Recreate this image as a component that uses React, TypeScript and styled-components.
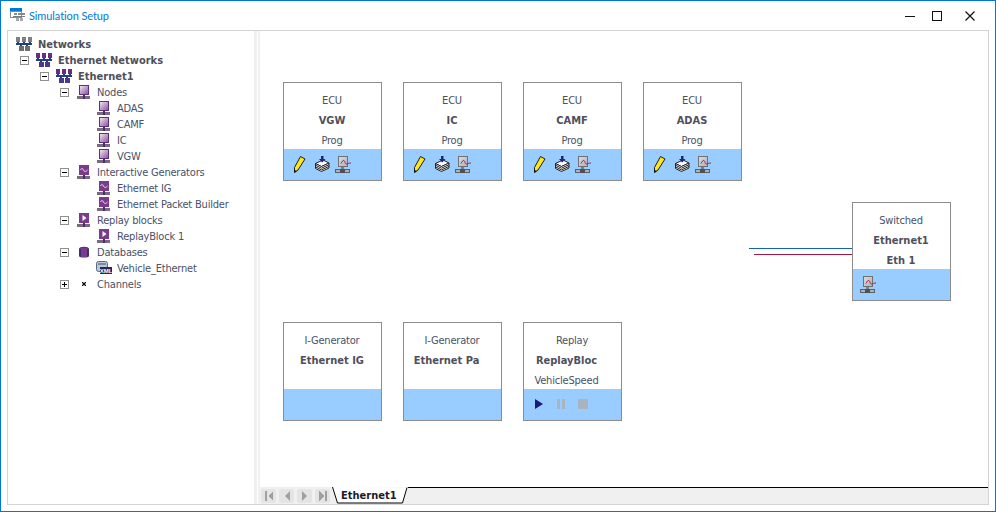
import styled, { createGlobalStyle } from "styled-components";

const FONT = `"DejaVu Sans Condensed", "Liberation Sans", sans-serif`;

const GlobalStyle = createGlobalStyle`
    html, body {
        margin: 0;
        padding: 0;
        background: #ffffff;
    }
`;

/* ---- tree icons ---- */

const NetworkIcon = ({ tone }: { tone: "gray" | "purple" }) => {
    const top = tone === "gray" ? "#7f7f7f" : "#6c2a86";
    const bottom = tone === "gray" ? "#6f6f6f" : "#4d3690";
    return (
        <svg width="16" height="16" viewBox="0 0 16 16" shapeRendering="crispEdges">
            <rect x="0" y="1" width="4" height="5" fill={top} />
            <rect x="6" y="1" width="4" height="5" fill={top} />
            <rect x="12" y="1" width="4" height="5" fill={top} />
            <rect x="1" y="6" width="2" height="2" fill="#1f3f80" />
            <rect x="7" y="6" width="2" height="2" fill="#1f3f80" />
            <rect x="13" y="6" width="2" height="2" fill="#1f3f80" />
            <rect x="0" y="7" width="16" height="2" fill="#1f3f80" />
            <rect x="4" y="9" width="2" height="2" fill="#1f3f80" />
            <rect x="10" y="9" width="2" height="2" fill="#1f3f80" />
            <rect x="3" y="10" width="5" height="5" fill={bottom} />
            <rect x="9" y="10" width="5" height="5" fill={bottom} />
        </svg>
    );
};

const NodeBase = () => (
    <>
        <rect x="1" y="12" width="13" height="3" fill="#7a6a80" />
        <rect x="7" y="11" width="2" height="4" fill="#4a2a70" />
    </>
);

const NodeIcon = () => (
    <svg width="16" height="16" viewBox="0 0 16 16" shapeRendering="crispEdges">
        <defs>
            <linearGradient id="nodeFill" x1="0" y1="0" x2="1" y2="1">
                <stop offset="0" stopColor="#f6eef8" />
                <stop offset="1" stopColor="#8a4a9c" />
            </linearGradient>
        </defs>
        <rect x="3.500" y="1.500" width="9" height="9" fill="url(#nodeFill)" stroke="#5a3080" />
        <NodeBase />
    </svg>
);

const GeneratorIcon = () => (
    <svg width="16" height="16" viewBox="0 0 16 16">
        <rect x="3" y="1" width="10" height="10" fill="#7b3a8e" shapeRendering="crispEdges" />
        <path d="M4.500 6c1-2 2-2 3 0s2 2 4 0" fill="none" stroke="#f4e8f8" strokeWidth="1" />
        <g shapeRendering="crispEdges">
            <NodeBase />
        </g>
    </svg>
);

const ReplayIcon = () => (
    <svg width="16" height="16" viewBox="0 0 16 16">
        <rect x="3" y="1" width="10" height="10" fill="#7b3a8e" shapeRendering="crispEdges" />
        <path d="M6.500 3L10.500 6L6.500 9Z" fill="#ffffff" />
        <g shapeRendering="crispEdges">
            <NodeBase />
        </g>
    </svg>
);

const DatabaseIcon = () => (
    <svg width="16" height="16" viewBox="0 0 16 16">
        <path d="M3 5c0-3 10-3 10 0v7c0 2-10 2-10 0Z" fill="#3c3070" />
        <rect x="5" y="5" width="6" height="8" fill="#7b3a8e" />
        <ellipse cx="8" cy="4.500" rx="4" ry="1" fill="#7b3a8e" />
    </svg>
);

const XmlIcon = () => (
    <svg width="16" height="16" viewBox="0 0 16 16">
        <rect x="0.500" y="1.500" width="11" height="10" rx="2" fill="#b9c8d8" stroke="#5a6a80" />
        <rect x="2" y="3" width="8" height="2" fill="#7b8ca0" />
        <rect x="4" y="7" width="12" height="7" fill="#26265c" />
        <text x="10" y="13" fontSize="6" fontWeight="700" textAnchor="middle" fill="#ffffff" fontFamily="Liberation Sans, sans-serif">
            XML
        </text>
    </svg>
);

const ChannelIcon = () => (
    <svg width="16" height="16" viewBox="0 0 16 16" shapeRendering="crispEdges">
        <rect x="6" y="6" width="1" height="1" fill="#111" />
        <rect x="9" y="6" width="1" height="1" fill="#111" />
        <rect x="6" y="9" width="1" height="1" fill="#111" />
        <rect x="9" y="9" width="1" height="1" fill="#111" />
        <rect x="7" y="7" width="2" height="2" fill="#111" />
        <rect x="7" y="6" width="2" height="1" fill="#999" />
        <rect x="7" y="9" width="2" height="1" fill="#999" />
        <rect x="6" y="7" width="1" height="2" fill="#999" />
        <rect x="9" y="7" width="1" height="2" fill="#999" />
    </svg>
);

/* ---- card icons, all on a 20x20 tool slot ---- */

const PencilIcon = () => (
    <svg width="20" height="20" viewBox="0 0 20 20">
        <path d="M8.500 1.500L13 4L6 15L2.500 17.500L2.500 12.500Z" fill="#ffe61a" stroke="#1a1a1a" strokeWidth="1" />
        <path d="M2 18L2.500 15L5 16Z" fill="#111" />
    </svg>
);

const StackIcon = () => (
    <svg width="20" height="20" viewBox="0 0 20 20">
        <path d="M3.500 8.500L11 5L17 8L9.500 11.500Z" fill="#fff" stroke="#222" strokeWidth="1" />
        <path d="M3.500 8.500v5l6 3l7.500-3.500v-5l-7.500 3.500Z" fill="#fff" stroke="#222" strokeWidth="1" />
        <path d="M3.500 10.200l6 3l7.500-3.500M3.500 11.900l6 3l7.500-3.500" fill="none" stroke="#222" strokeWidth="1" />
        <path d="M9 1h2.500v3h2L10.200 7.500L7 4h2Z" fill="#23237a" />
    </svg>
);

const MonitorIcon = () => (
    <svg width="20" height="20" viewBox="0 0 20 20">
        <defs>
            <linearGradient id="screenFill" x1="0" y1="0" x2="1" y2="1">
                <stop offset="0" stopColor="#d8dde2" />
                <stop offset="1" stopColor="#a8b4c0" />
            </linearGradient>
        </defs>
        <g shapeRendering="crispEdges">
            <rect x="6.500" y="1.500" width="9" height="10" fill="url(#screenFill)" stroke="#707070" />
            <rect x="9" y="12" width="3" height="3" fill="#808080" />
            <rect x="3.500" y="14.500" width="14" height="3" fill="#a8b4c0" stroke="#606060" />
            <rect x="8" y="14" width="5" height="4" fill="#505050" />
        </g>
        <path d="M9 8.500c1-2 2-3.500 3-3s1 3.500 2.500 3.500s1.500-1 4.500-1" fill="none" stroke="#c01830" strokeWidth="1" />
    </svg>
);

const PlayIcon = () => (
    <svg width="20" height="20" viewBox="0 0 20 20">
        <path d="M3 4L11 9L3 14Z" fill="#1a1a78" />
    </svg>
);

const PauseIcon = () => (
    <svg width="20" height="20" viewBox="0 0 20 20" shapeRendering="crispEdges">
        <rect x="5" y="4" width="3" height="10" fill="#a8b4c0" />
        <rect x="10" y="4" width="3" height="10" fill="#a8b4c0" />
    </svg>
);

const StopIcon = () => (
    <svg width="20" height="20" viewBox="0 0 20 20" shapeRendering="crispEdges">
        <rect x="6" y="4" width="10" height="10" fill="#a8b4c0" />
    </svg>
);

/* ---- data ---- */

type TreeItem = {
    label: string;
    depth: number;
    expander?: "minus" | "plus";
    bold?: boolean;
    icon: React.ReactNode;
};

const treeItems: TreeItem[] = [
    { label: "Networks", depth: 0, bold: true, icon: <NetworkIcon tone="gray" /> },
    { label: "Ethernet Networks", depth: 1, bold: true, expander: "minus", icon: <NetworkIcon tone="purple" /> },
    { label: "Ethernet1", depth: 2, bold: true, expander: "minus", icon: <NetworkIcon tone="purple" /> },
    { label: "Nodes", depth: 3, expander: "minus", icon: <NodeIcon /> },
    { label: "ADAS", depth: 4, icon: <NodeIcon /> },
    { label: "CAMF", depth: 4, icon: <NodeIcon /> },
    { label: "IC", depth: 4, icon: <NodeIcon /> },
    { label: "VGW", depth: 4, icon: <NodeIcon /> },
    { label: "Interactive Generators", depth: 3, expander: "minus", icon: <GeneratorIcon /> },
    { label: "Ethernet IG", depth: 4, icon: <GeneratorIcon /> },
    { label: "Ethernet Packet Builder", depth: 4, icon: <GeneratorIcon /> },
    { label: "Replay blocks", depth: 3, expander: "minus", icon: <ReplayIcon /> },
    { label: "ReplayBlock 1", depth: 4, icon: <ReplayIcon /> },
    { label: "Databases", depth: 3, expander: "minus", icon: <DatabaseIcon /> },
    { label: "Vehicle_Ethernet", depth: 4, icon: <XmlIcon /> },
    { label: "Channels", depth: 3, expander: "plus", icon: <ChannelIcon /> },
];

type CardData = {
    x: number;
    y: number;
    kind: string;
    name: string;
    sub?: string;
    subBold?: boolean;
    clipped?: boolean; // long names sit left of the centre
    tools: "ecu" | "switch" | "none" | "replay";
};

const cards: CardData[] = [
    { x: 23, y: 51, kind: "ECU", name: "VGW", sub: "Prog", tools: "ecu" },
    { x: 143, y: 51, kind: "ECU", name: "IC", sub: "Prog", tools: "ecu" },
    { x: 263, y: 51, kind: "ECU", name: "CAMF", sub: "Prog", tools: "ecu" },
    { x: 383, y: 51, kind: "ECU", name: "ADAS", sub: "Prog", tools: "ecu" },
    { x: 592, y: 171, kind: "Switched", name: "Ethernet1", sub: "Eth 1", subBold: true, tools: "switch" },
    { x: 23, y: 291, kind: "I-Generator", name: "Ethernet IG", tools: "none" },
    { x: 143, y: 291, kind: "I-Generator", name: "Ethernet Pa", clipped: true, tools: "none" },
    { x: 263, y: 291, kind: "Replay", name: "ReplayBloc", sub: "VehicleSpeed", clipped: true, tools: "replay" },
];

const App = () => {
    return (
        <>
            <GlobalStyle />
            <Window>
                <TitleBar>
                    <TitleIcon>
                        <svg width="16" height="16" viewBox="0 0 16 16" shapeRendering="crispEdges">
                            <rect x="0" y="0" width="12" height="3" fill="#0078d7" />
                            <rect x="0.500" y="3.500" width="11" height="6" fill="#fff" stroke="#8a8a8a" />
                            <rect x="4" y="5" width="3" height="2" fill="#8a8a8a" />
                            <rect x="8" y="5" width="3" height="2" fill="#8a8a8a" />
                            <rect x="12" y="5" width="3" height="2" fill="#8a8a8a" />
                            <rect x="3" y="8" width="12" height="1" fill="#6f7f90" />
                            <rect x="6" y="10" width="3" height="3" fill="#a8a8a8" />
                            <rect x="10" y="10" width="3" height="3" fill="#a8a8a8" />
                        </svg>
                    </TitleIcon>
                    <TitleText>Simulation Setup</TitleText>
                    <Controls>
                        <ControlButton $width={16}>
                            <svg width="10" height="10" viewBox="0 0 10 10" shapeRendering="crispEdges">
                                <rect x="0" y="5" width="10" height="1" fill="#111" />
                            </svg>
                        </ControlButton>
                        <ControlButton $width={27}>
                            <svg width="10" height="10" viewBox="0 0 10 10" shapeRendering="crispEdges">
                                <rect x="0.500" y="0.500" width="9" height="9" fill="none" stroke="#111" />
                            </svg>
                        </ControlButton>
                        <ControlButton $width={33}>
                            <svg width="10" height="10" viewBox="0 0 10 10">
                                <path d="M0.500 0.500L9.500 9.500M9.500 0.500L0.500 9.500" stroke="#111" strokeWidth="1.200" />
                            </svg>
                        </ControlButton>
                    </Controls>
                </TitleBar>
                <Body>
                    <Frame>
                        <TreePanel>
                            {treeItems.map((item) => (
                                <TreeRow key={item.label} $depth={item.depth}>
                                    {item.depth > 0 && (
                                        <ExpanderSlot>
                                            {item.expander && (
                                                <Expander $plus={item.expander === "plus"} />
                                            )}
                                        </ExpanderSlot>
                                    )}
                                    <TreeIcon>{item.icon}</TreeIcon>
                                    <TreeLabel $bold={item.bold}>{item.label}</TreeLabel>
                                </TreeRow>
                            ))}
                        </TreePanel>
                        <Splitter />
                        <DiagramPanel>
                            <Canvas>
                                <Wire $y={217} $left={489} $color="#1464b4" />
                                <Wire $y={223} $left={494} $color="#a01840" />
                                {cards.map((card) => (
                                    <Card key={card.name} $x={card.x} $y={card.y}>
                                        <CardText>
                                            <CardLine>{card.kind}</CardLine>
                                            <CardLine $bold $clipped={card.clipped}>{card.name}</CardLine>
                                            {card.sub && (
                                                <CardLine $bold={card.subBold} $clipped={card.clipped}>
                                                    {card.sub}
                                                </CardLine>
                                            )}
                                        </CardText>
                                        <CardFooter $inset={card.tools === "switch" ? 4 : 8}>
                                            {card.tools === "ecu" && (
                                                <>
                                                    <PencilIcon />
                                                    <StackIcon />
                                                    <MonitorIcon />
                                                </>
                                            )}
                                            {card.tools === "switch" && <MonitorIcon />}
                                            {card.tools === "replay" && (
                                                <>
                                                    <PlayIcon />
                                                    <PauseIcon />
                                                    <StopIcon />
                                                </>
                                            )}
                                        </CardFooter>
                                    </Card>
                                ))}
                            </Canvas>
                            <TabBar>
                                <NavGroup>
                                    <NavButton>
                                        <svg width="10" height="12" viewBox="0 0 10 12" shapeRendering="crispEdges">
                                            <rect x="1" y="1" width="2" height="10" fill="#a0a0a0" />
                                            <path d="M9 1L4 6L9 11Z" fill="#a0a0a0" />
                                        </svg>
                                    </NavButton>
                                    <NavButton>
                                        <svg width="10" height="12" viewBox="0 0 10 12">
                                            <path d="M8 1L3 6L8 11Z" fill="#a0a0a0" />
                                        </svg>
                                    </NavButton>
                                    <NavButton>
                                        <svg width="10" height="12" viewBox="0 0 10 12">
                                            <path d="M2 1L7 6L2 11Z" fill="#a0a0a0" />
                                        </svg>
                                    </NavButton>
                                    <NavButton>
                                        <svg width="10" height="12" viewBox="0 0 10 12" shapeRendering="crispEdges">
                                            <path d="M1 1L6 6L1 11Z" fill="#a0a0a0" />
                                            <rect x="7" y="1" width="2" height="10" fill="#a0a0a0" />
                                        </svg>
                                    </NavButton>
                                </NavGroup>
                                <TabShape>
                                    <svg width="76" height="17" viewBox="0 0 76 17">
                                        <path d="M0.500 0L5.500 16H70.500L75 0.500" fill="#ffffff" stroke="#000000" strokeWidth="1" />
                                    </svg>
                                    <TabLabel>Ethernet1</TabLabel>
                                </TabShape>
                                <TabRest />
                            </TabBar>
                        </DiagramPanel>
                    </Frame>
                </Body>
            </Window>
        </>
    );
};

export default App;

const Window = styled.div`
    box-sizing: border-box;
    width: 996px;
    height: 512px;
    display: flex;
    flex-direction: column;
    border: 1px solid #0078d7;
    background: #ffffff;
    overflow: hidden;
    font-family: ${FONT};
`;

const TitleBar = styled.div`
    display: flex;
    align-items: center;
    height: 29px;
    flex-shrink: 0;
    padding-left: 9px;
`;

const TitleIcon = styled.div`
    display: flex;
    width: 19px;
    height: 16px;
`;

const TitleText = styled.span`
    color: #0078d7;
    font-family: Lato, "Liberation Sans", sans-serif;
    font-size: 11px;
    letter-spacing: -0.1px;
`;

const Controls = styled.div`
    display: flex;
    margin-left: auto;
    padding-right: 20px;
`;

const ControlButton = styled.div<{ $width: number }>`
    display: flex;
    justify-content: flex-end;
    align-items: center;
    width: ${({ $width }) => $width}px;
    height: 29px;
`;

const Body = styled.div`
    display: flex;
    flex: 1;
    min-height: 0;
    padding: 0 6px 6px 6px;
`;

const Frame = styled.div`
    display: flex;
    flex: 1;
    min-width: 0;
    border: 1px solid #d4d4d4;
`;

const TreePanel = styled.div`
    box-sizing: border-box;
    width: 246px;
    flex-shrink: 0;
    padding: 5px 0 0 8px;
    background: #ffffff;
`;

const Splitter = styled.div`
    box-sizing: border-box;
    width: 6px;
    flex-shrink: 0;
    background: #f0f0f0;
    border-left: 3px solid #f0f0f0;
    background-clip: content-box;
    padding-left: 1px;
`;

const TreeRow = styled.div<{ $depth: number }>`
    display: flex;
    align-items: center;
    height: 16px;
    padding-left: ${({ $depth }) => Math.max(0, $depth - 1) * 20}px;
`;

const ExpanderSlot = styled.div`
    display: flex;
    align-items: center;
    width: 20px;
    height: 16px;
    padding-left: 4px;
    box-sizing: border-box;
`;

const Expander = styled.div<{ $plus?: boolean }>`
    position: relative;
    box-sizing: border-box;
    width: 9px;
    height: 9px;
    border: 1px solid #8f8f8f;
    background: #ffffff;

    &::before {
        content: "";
        position: absolute;
        left: 1px;
        top: 3px;
        width: 5px;
        height: 1px;
        background: #000000;
    }

    &::after {
        content: "";
        display: ${({ $plus }) => ($plus ? "block" : "none")};
        position: absolute;
        left: 3px;
        top: 1px;
        width: 1px;
        height: 5px;
        background: #000000;
    }
`;

const TreeIcon = styled.div`
    display: flex;
    width: 16px;
    height: 16px;
    margin-right: 5px;
    flex-shrink: 0;
`;

const TreeLabel = styled.span<{ $bold?: boolean }>`
    color: ${({ $bold }) => ($bold ? "#4f4f5c" : "#4a5068")};
    font-size: 11px;
    line-height: 16px;
    padding-top: 2px;
    font-weight: ${({ $bold }) => ($bold ? 700 : 400)};
    letter-spacing: ${({ $bold }) => ($bold ? 0 : -0.2)}px;
    margin-left: ${({ $bold }) => ($bold ? 1 : 0)}px;
    white-space: nowrap;
`;

const DiagramPanel = styled.div`
    flex: 1;
    display: flex;
    flex-direction: column;
    min-width: 0;
    background: #ffffff;
`;

const Canvas = styled.div`
    position: relative;
    flex: 1;
    min-height: 0;
`;

const Wire = styled.div<{ $y: number; $left: number; $color: string }>`
    position: absolute;
    left: ${({ $left }) => $left}px;
    top: ${({ $y }) => $y}px;
    width: ${({ $left }) => 593 - $left}px;
    height: 1px;
    background: ${({ $color }) => $color};
`;

const Card = styled.div<{ $x: number; $y: number }>`
    position: absolute;
    left: ${({ $x }) => $x}px;
    top: ${({ $y }) => $y}px;
    box-sizing: border-box;
    width: 99px;
    height: 99px;
    display: flex;
    flex-direction: column;
    border: 1px solid #8c8c8c;
    background: #ffffff;
`;

const CardText = styled.div`
    box-sizing: border-box;
    height: 66px;
    padding: 8px 1px 0 0;
    display: flex;
    flex-direction: column;
    align-items: center;
    overflow: hidden;
`;

const CardLine = styled.div<{ $bold?: boolean; $clipped?: boolean }>`
    color: ${({ $bold }) => ($bold ? "#4f4f5c" : "#4a5068")};
    font-size: 11px;
    line-height: 20px;
    font-weight: ${({ $bold }) => ($bold ? 700 : 400)};
    letter-spacing: ${({ $bold }) => ($bold ? 0 : -0.2)}px;
    margin-right: ${({ $clipped }) => ($clipped ? 11 : 0)}px;
    white-space: nowrap;
`;

const CardFooter = styled.div<{ $inset: number }>`
    flex: 1;
    display: flex;
    align-items: flex-start;
    padding: 6px 0 0 ${({ $inset }) => $inset}px;
    background: #99ccff;
`;

const TabBar = styled.div`
    display: flex;
    align-items: flex-end;
    height: 17px;
    flex-shrink: 0;
    background: #f0f0f0;
`;

const NavGroup = styled.div`
    display: flex;
    align-items: center;
    gap: 3px;
    height: 17px;
    width: 72px;
    padding-left: 1px;
    box-sizing: border-box;
`;

const NavButton = styled.div`
    display: flex;
    align-items: center;
    justify-content: center;
    width: 15px;
    height: 14px;
    border-radius: 2px;
    background: #e4e4e4;
`;

const TabShape = styled.div`
    position: relative;
    width: 76px;
    height: 17px;
    flex-shrink: 0;

    svg {
        position: absolute;
        left: 0;
        top: 0;
    }
`;

const TabLabel = styled.span`
    position: absolute;
    left: 9px;
    top: 0;
    font-size: 11px;
    line-height: 18px;
    font-weight: 700;
    color: #1a1a2a;
`;

const TabRest = styled.div`
    flex: 1;
    align-self: flex-start;
    height: 1px;
    background: #000000;
`;
